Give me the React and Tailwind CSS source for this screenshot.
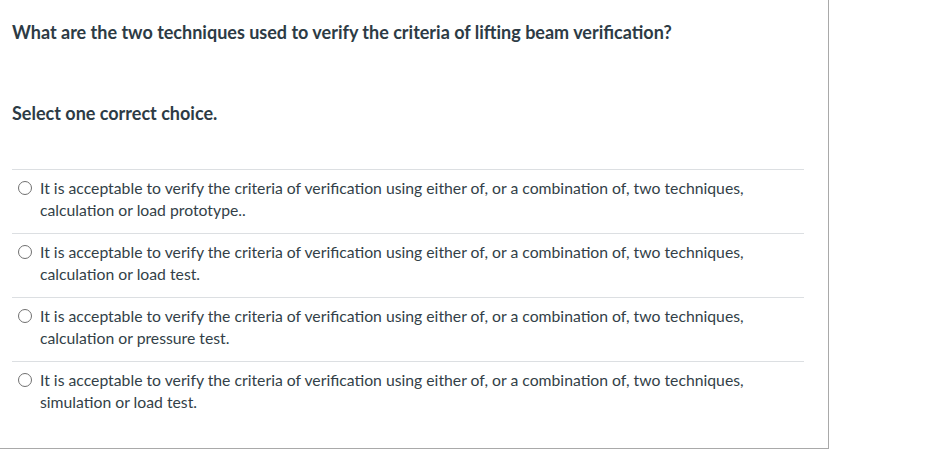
const choices = [
  "It is acceptable to verify the criteria of verification using either of, or a combination of, two techniques, calculation or load prototype..",
  "It is acceptable to verify the criteria of verification using either of, or a combination of, two techniques, calculation or load test.",
  "It is acceptable to verify the criteria of verification using either of, or a combination of, two techniques, calculation or pressure test.",
  "It is acceptable to verify the criteria of verification using either of, or a combination of, two techniques, simulation or load test.",
];

export default function App() {
  return (
    <div className="w-[942px] h-[467px] bg-white font-['Lato','Liberation_Sans',sans-serif] text-[#2d3b45]">
      <div className="w-[829px] h-[449px] border-r border-b border-[#a9a9a9] px-3 pt-5">
        <p className="text-lg font-bold leading-6">
          What are the two techniques used to verify the criteria of lifting beam verification?
        </p>
        <p className="text-lg font-bold leading-6 mt-[57px]">Select one correct choice.</p>

        <div className="mt-[44px] w-[792px]">
          {choices.map((c, i) => (
            <div key={i} className="flex items-start border-t border-[#dcdfe2] pt-[7px] pb-3">
              <span className="mt-1 ml-[6px] w-[14px] h-[14px] shrink-0 rounded-full border border-[#707070] bg-white"></span>
              <p className="ml-[8px] text-[15.75px] font-normal leading-[22px] text-[#333f48] pr-4">{c}</p>
            </div>
          ))}
        </div>
      </div>
    </div>
  );
}
